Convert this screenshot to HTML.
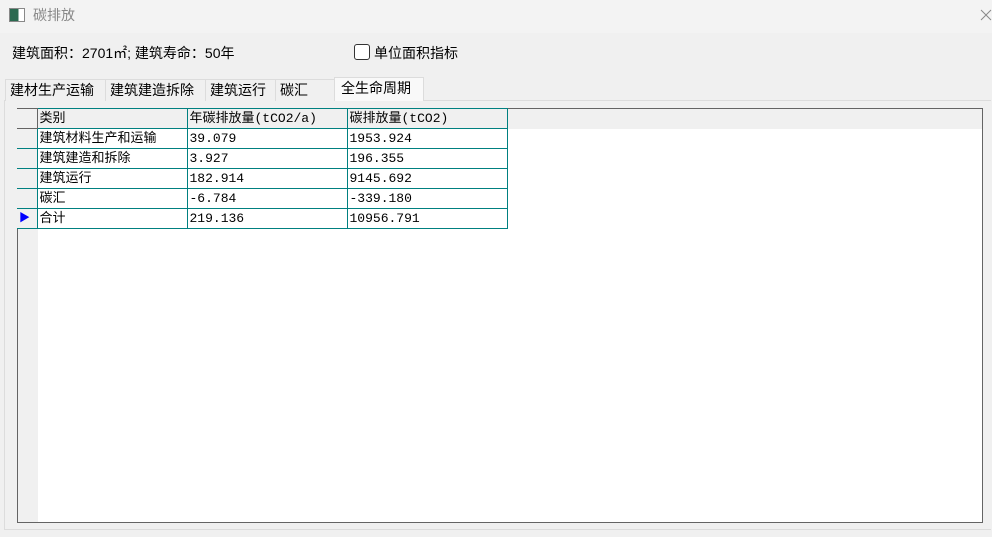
<!DOCTYPE html><html><head><style>
body{margin:0;width:992px;height:537px;background:#f0f0f0;font-family:"Liberation Sans","Noto Sans CJK SC",sans-serif;font-size:14px;color:#000;position:relative;overflow:hidden}
.a{position:absolute;white-space:nowrap}
.tab{position:absolute;top:79px;height:21px;line-height:20px;background:#f0f0f0;border:1px solid #dcdcdc;border-bottom:none;padding:0 4px;font-size:14px}
table{border-collapse:collapse;position:absolute;left:17px;top:108px;font-size:13px;font-family:"Liberation Mono","Noto Sans CJK SC",monospace}
td{border:1px solid #008080;height:19px;padding:0 2px;line-height:18px;background:#fff;box-sizing:border-box}
tr{height:20px}
td.h{background:#f0f0f0}
td.r{background:#f0f0f0;width:20px;border-left:none}
</style></head><body>
<div class="a" style="left:0;top:0;width:992px;height:33px;background:#f3f3f3"></div>
<div class="a" style="left:9px;top:8px;width:14px;height:12px;border:1px solid #888;background:linear-gradient(90deg,#2a6a50 60%,#fff 60%)"></div>
<div class="a" style="left:33px;top:5px;font-size:14px;color:#888">碳排放</div>
<svg class="a" style="left:980px;top:9px" width="12" height="12"><path d="M1 1L11 11M11 1L1 11" stroke="#888" stroke-width="1"/></svg>
<div class="a" style="left:12px;top:43px">建筑面积：2701㎡; 建筑寿命：50年</div>
<div class="a" style="left:354px;top:44px;width:14px;height:14px;border:1px solid #333;border-radius:3px;background:#fff"></div>
<div class="a" style="left:374px;top:43px">单位面积指标</div>
<div class="a" style="left:4px;top:100px;width:986px;height:428px;border-top:1px solid #dcdcdc;border-left:1px solid #dcdcdc;border-bottom:1px solid #dcdcdc"></div>
<div class="tab" style="left:5px;width:92px">建材生产运输</div>
<div class="tab" style="left:105px;width:92px">建筑建造拆除</div>
<div class="tab" style="left:205px;width:63px">建筑运行</div>
<div class="tab" style="left:275px;width:52px">碳汇</div>
<div class="tab" style="left:334px;top:77px;height:23px;width:78px;background:#f9f9f9;padding-left:6px">全生命周期</div>
<div class="a" style="left:17px;top:108px;width:964px;height:413px;border:1px solid #646464;background:#fff"></div>
<div class="a" style="left:18px;top:109px;width:964px;height:20px;background:#f0f0f0"></div>
<div class="a" style="left:18px;top:109px;width:20px;height:413px;background:#f0f0f0"></div>
<table>
<tr><td class="h r" style="border-color:#646464"></td><td class="h" style="width:150px">类别</td><td class="h" style="width:160px">年碳排放量(tCO2/a)</td><td class="h" style="width:160px">碳排放量(tCO2)</td></tr>
<tr><td class="r"></td><td>建筑材料生产和运输</td><td>39.079</td><td>1953.924</td></tr>
<tr><td class="r"></td><td>建筑建造和拆除</td><td>3.927</td><td>196.355</td></tr>
<tr><td class="r"></td><td>建筑运行</td><td>182.914</td><td>9145.692</td></tr>
<tr><td class="r"></td><td>碳汇</td><td>-6.784</td><td>-339.180</td></tr>
<tr><td class="r"><span style="color:#0000ff;font-size:11px">▶</span></td><td>合计</td><td>219.136</td><td>10956.791</td></tr>
</table>
</body></html>
